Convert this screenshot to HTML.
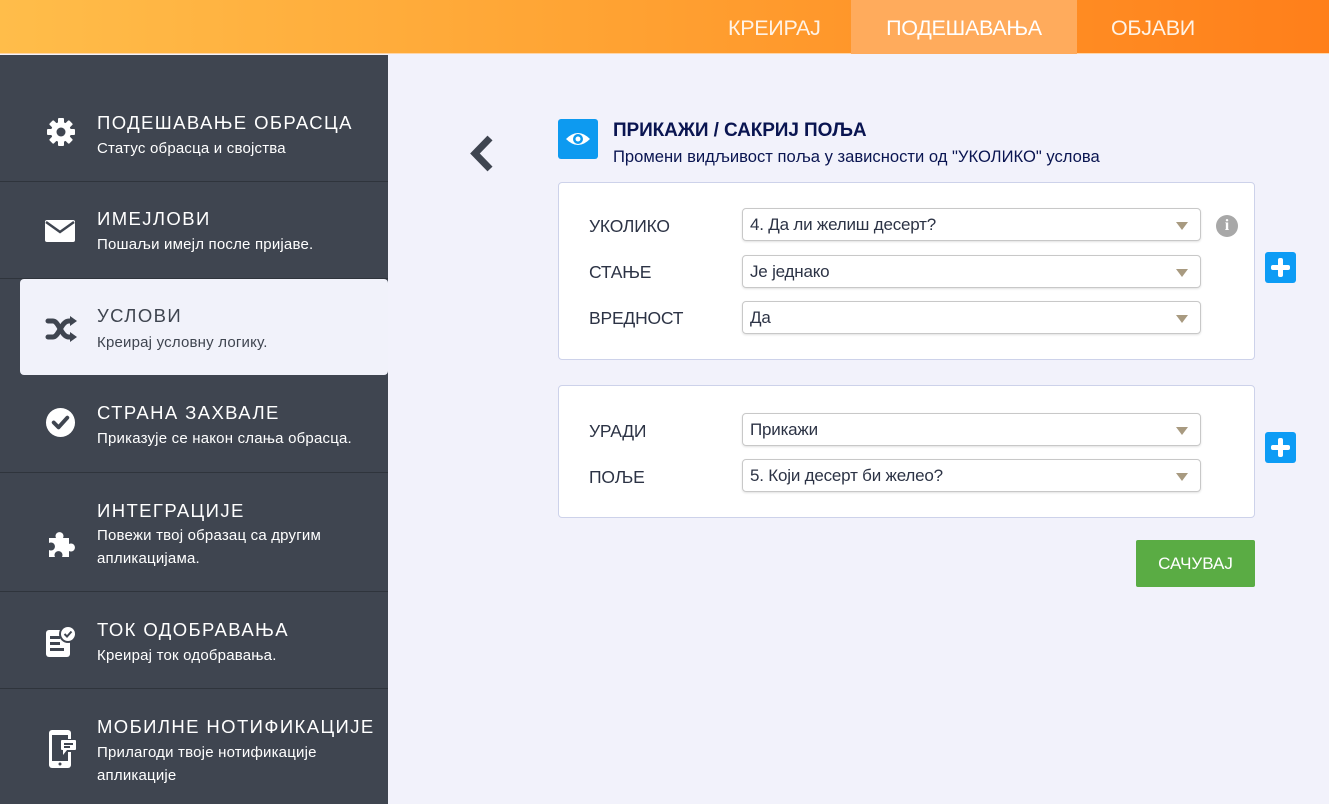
<!DOCTYPE html>
<html><head><meta charset="utf-8"><style>
*{box-sizing:border-box;margin:0;padding:0}
body{width:1329px;height:804px;overflow:hidden;background:#f2f2fb;font-family:"Liberation Sans","DejaVu Sans",sans-serif;position:relative}
.top{position:absolute;left:0;top:0;width:1329px;height:54px;background:linear-gradient(90deg,#ffbd4a 0%,#ffa333 45%,#ff7f1a 100%);border-bottom:1px solid #ffd6a8}
.tab{position:absolute;top:0;height:54px;line-height:56px;color:#fff3e6;font-size:21.5px;letter-spacing:-0.3px}
.tab.act{background:#ffab5c;color:#fff}
.side{position:absolute;left:0;top:55px;width:388px;height:749px;background:#3f4550}
.it{position:absolute;left:0;width:388px;border-bottom:1px solid #2f343c;color:#fff}
.it .t{position:absolute;left:97px;font-size:18.5px;letter-spacing:1.4px;white-space:nowrap}
.it .s{position:absolute;left:97px;font-size:15px;line-height:23px;letter-spacing:0.2px;width:285px}
.it svg{position:absolute;left:45px}
.act2{left:20px;width:368px;background:#f1f2fa;border-radius:4px;color:#3f4550;border:none}
.act2 .t{left:77px}.act2 .s{left:77px}.act2 svg{left:25px}
.card{position:absolute;left:558px;width:697px;background:#fff;border:1px solid #cdd2ea;border-radius:4px}
.lab{position:absolute;left:30px;font-size:17.5px;color:#2c3345;letter-spacing:-0.2px}
.sel{position:absolute;left:183px;width:459px;height:33px;border:1px solid #c8c8c8;border-radius:4px;box-shadow:0 1px 2px rgba(0,0,0,.12);font-size:17px;color:#2c3345;padding:6px 0 0 7px;letter-spacing:-0.2px}
.sel:after{content:"";position:absolute;right:12px;top:13px;border-left:6px solid transparent;border-right:6px solid transparent;border-top:8px solid #a89a80}
.plus{position:absolute;left:1265px;width:31px;height:31px;background:#0d9cf5;border-radius:3px}
.plus:before{content:"";position:absolute;left:6px;top:13px;width:19px;height:5px;background:#fff;border-radius:2px}
.plus:after{content:"";position:absolute;left:13px;top:6px;width:5px;height:19px;background:#fff;border-radius:2px}
</style></head><body>
<div class="top">
<div class="tab" style="left:728px">КРЕИРАЈ</div>
<div class="tab act" style="left:851px;width:226px;text-align:center">ПОДЕШАВАЊА</div>
<div class="tab" style="left:1111px">ОБЈАВИ</div>
</div>
<div class="side">
<div class="it" style="top:0;height:127px">
<svg style="top:61px" width="32" height="32" viewBox="0 0 32 32"><g fill="#fff"><circle cx="16" cy="16" r="10"/><g><rect x="13" y="2" width="6" height="28" rx="1"/><rect x="13" y="2" width="6" height="28" rx="1" transform="rotate(45 16 16)"/><rect x="13" y="2" width="6" height="28" rx="1" transform="rotate(90 16 16)"/><rect x="13" y="2" width="6" height="28" rx="1" transform="rotate(135 16 16)"/></g></g><circle cx="16" cy="16" r="4.5" fill="#3f4550"/></svg>
<div class="t" style="top:57px">ПОДЕШАВАЊЕ ОБРАСЦА</div>
<div class="s" style="top:82px">Статус обрасца и својства</div></div>
<div class="it" style="top:127px;height:97px">
<svg style="top:38px" width="30" height="22" viewBox="0 0 30 22"><rect x="0" y="0" width="30" height="22" rx="2" fill="#fff"/><path d="M1 2 L15 12 L29 2" stroke="#3f4550" stroke-width="2.5" fill="none"/></svg>
<div class="t" style="top:26px">ИМЕЈЛОВИ</div>
<div class="s" style="top:51px">Пошаљи имејл после пријаве.</div></div>
<div class="it act2" style="top:224px;height:96px">
<svg style="top:37px" width="32" height="26" viewBox="0 0 32 26"><g stroke="#3f4550" stroke-width="5" fill="none" stroke-linecap="round"><path d="M3 5 H8 C14 5 16 21 24 21 H26"/><path d="M3 21 H8 C14 21 16 5 24 5 H26"/></g><path d="M25 0 L32 5 L25 10Z M25 16 L32 21 L25 26Z" fill="#3f4550"/></svg>
<div class="t" style="top:26px">УСЛОВИ</div>
<div class="s" style="top:52px">Креирај условну логику.</div></div>
<div class="it" style="top:320px;height:98px">
<svg style="top:32px" width="31" height="31" viewBox="0 0 32 32"><circle cx="16" cy="16" r="15" fill="#fff"/><path d="M9 16 L14 21 L23 11" stroke="#3f4550" stroke-width="4" fill="none" stroke-linecap="round" stroke-linejoin="round"/></svg>
<div class="t" style="top:27px">СТРАНА ЗАХВАЛЕ</div>
<div class="s" style="top:52px">Приказује се након слања обрасца.</div></div>
<div class="it" style="top:418px;height:119px">
<svg style="top:57px" width="31" height="31" viewBox="0 0 31 31" fill="#fff"><path d="M4 8 H11 A4 4 0 1 1 18 8 H24 V14 A4 4 0 1 1 24 21 V27 H17 A4 4 0 1 0 10 27 H4 V20 A4 4 0 1 0 4 13Z"/></svg>
<div class="t" style="top:27px">ИНТЕГРАЦИЈЕ</div>
<div class="s" style="top:51px">Повежи твој образац са другим апликацијама.</div></div>
<div class="it" style="top:537px;height:97px">
<svg style="top:33px" width="31" height="32" viewBox="0 0 31 32"><rect x="1" y="5" width="24" height="27" rx="3" fill="#fff"/><rect x="5" y="11" width="10" height="3" fill="#3f4550"/><rect x="5" y="17" width="10" height="3" fill="#3f4550"/><rect x="5" y="23" width="14" height="3" fill="#3f4550"/><circle cx="23" cy="9" r="9" fill="#3f4550"/><circle cx="23" cy="9" r="7" fill="#fff"/><path d="M19.5 9 L22 11.5 L26.5 6.5" stroke="#3f4550" stroke-width="2" fill="none"/></svg>
<div class="t" style="top:27px">ТОК ОДОБРАВАЊА</div>
<div class="s" style="top:52px">Креирај ток одобравања.</div></div>
<div class="it" style="top:634px;height:115px;border:none">
<svg style="top:40px" width="32" height="40" viewBox="0 0 32 40"><rect x="4" y="1" width="22" height="38" rx="3" fill="#fff"/><rect x="7" y="6" width="16" height="26" fill="#3f4550"/><circle cx="15" cy="35" r="1.5" fill="#3f4550"/><rect x="14" y="10" width="17" height="13" rx="2" fill="#3f4550"/><rect x="16" y="11" width="15" height="10" rx="1" fill="#fff"/><path d="M18 21 V26 L22 21Z" fill="#fff"/><rect x="19" y="14" width="9" height="2" fill="#3f4550"/><rect x="19" y="17" width="6" height="2" fill="#3f4550"/></svg>
<div class="t" style="top:27px">МОБИЛНЕ НОТИФИКАЦИЈЕ</div>
<div class="s" style="top:52px">Прилагоди твоје нотификације апликације</div></div>
</div>

<svg style="position:absolute;left:469px;top:135px" width="26" height="37" viewBox="0 0 26 37"><path d="M21 3 L6 18.5 L21 34" stroke="#3f4550" stroke-width="7" fill="none"/></svg>
<div style="position:absolute;left:558px;top:119px;width:40px;height:40px;background:#0d9af0;border-radius:3px">
<svg width="40" height="40" viewBox="0 0 40 40"><path d="M8 20 Q20 8 32 20 Q20 32 8 20Z" fill="#fff"/><circle cx="20" cy="20" r="5" fill="#0d9af0"/><circle cx="20" cy="20" r="2.5" fill="#fff"/></svg></div>
<div style="position:absolute;left:613px;top:120px;font-size:19px;font-weight:bold;color:#0a1551;letter-spacing:-0.1px">ПРИКАЖИ / САКРИЈ ПОЉА</div>
<div style="position:absolute;left:613px;top:147px;font-size:16.6px;color:#0a1551;letter-spacing:0px">Промени видљивост поља у зависности од "УКОЛИКО" услова</div>

<div class="card" style="top:182px;height:178px">
<div class="lab" style="top:33px">УКОЛИКО</div><div class="sel" style="top:25px">4. Да ли желиш десерт?</div>
<div class="lab" style="top:79px">СТАЊЕ</div><div class="sel" style="top:72px">Је једнако</div>
<div class="lab" style="top:125px">ВРЕДНОСТ</div><div class="sel" style="top:118px">Да</div>
<div style="position:absolute;left:657px;top:32px;width:22px;height:22px;border-radius:50%;background:#a8a8a8;color:#fff;font-weight:bold;font-size:16px;text-align:center;line-height:22px;font-family:'Liberation Serif',serif">i</div>
</div>
<div class="plus" style="top:252px"></div>
<div class="card" style="top:385px;height:133px">
<div class="lab" style="top:35px">УРАДИ</div><div class="sel" style="top:27px">Прикажи</div>
<div class="lab" style="top:81px">ПОЉЕ</div><div class="sel" style="top:73px">5. Који десерт би желео?</div>
</div>
<div class="plus" style="top:432px"></div>
<div style="position:absolute;left:1136px;top:540px;width:119px;height:47px;background:#5aac44;border-radius:2px;color:#fff;font-size:17px;text-align:center;line-height:47px">САЧУВАЈ</div>
</body></html>
